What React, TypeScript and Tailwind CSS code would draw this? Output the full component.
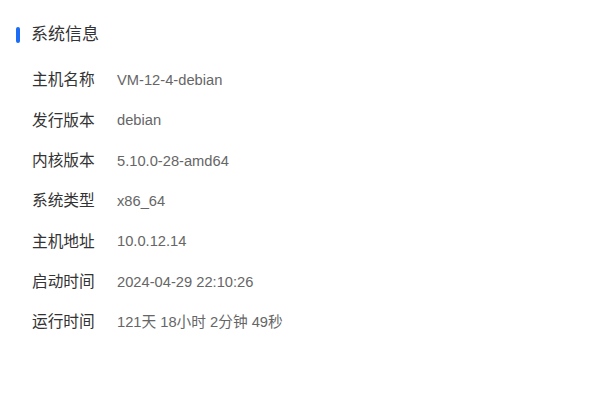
const rows = [
  { label: '主机名称', value: 'VM-12-4-debian' },
  { label: '发行版本', value: 'debian' },
  { label: '内核版本', value: '5.10.0-28-amd64' },
  { label: '系统类型', value: 'x86_64' },
  { label: '主机地址', value: '10.0.12.14' },
  { label: '启动时间', value: '2024-04-29 22:10:26' },
  { label: '运行时间', value: '121天 18小时 2分钟 49秒' },
];

export default function App() {
  return (
    <div
      className="w-[600px] h-[400px] bg-white overflow-hidden"
      style={{ fontFamily: '"Liberation Sans", "Noto Sans CJK SC", sans-serif' }}
    >
      <div className="h-[398px] border-b border-[#e6e6f0]">
        <div className="flex items-center h-[30px] mt-[20px] pl-[16px]">
          <span className="w-[4px] h-[16px] rounded-full bg-[#1d6cf5]" />
          <span className="ml-[11px] text-[17px] text-[#333333]">系统信息</span>
        </div>
        <div className="mt-[10px] pl-[32px]">
          {rows.map((r) => (
            <div key={r.label} className="flex items-center h-[40.33px]">
              <span className="w-[85px] text-[15.7px] text-[#333333]">{r.label}</span>
              <span className="text-[14.7px] text-[#666666]">{r.value}</span>
            </div>
          ))}
        </div>
      </div>
    </div>
  );
}
